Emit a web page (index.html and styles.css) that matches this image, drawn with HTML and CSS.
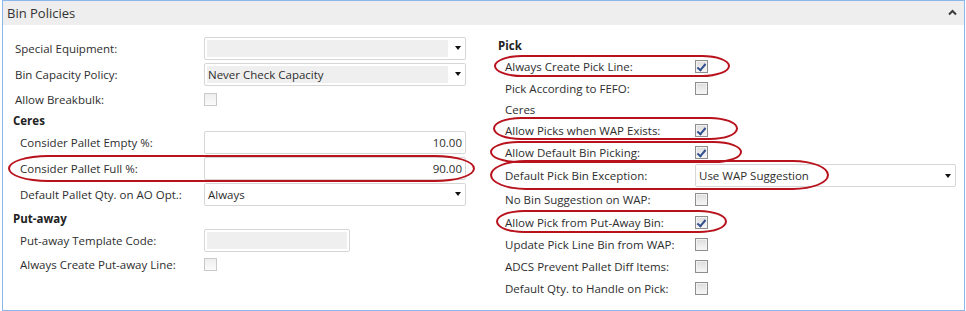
FILE: index.html
```html
<!DOCTYPE html>
<html lang="en">

<head>
    <meta charset="UTF-8">
    <title>Bin Policies</title>
    <link rel="stylesheet" href="styles.css">
</head>

<body>

<div class="panel">
    <div class="panel-head">
        <span class="panel-title">Bin Policies</span>
        <svg class="collapse" width="9" height="7" viewBox="0 0 9 7"><polyline points="1,5.5 4.5,2 8,5.5" fill="none" stroke="#3c3c3c" stroke-width="2"/></svg>
    </div>

    <div class="panel-body">

        <!-- Columna izquierda -->
        <div class="col col-left">
            <div class="row top">
                <label>Special Equipment:</label>
                <div class="ctl"><div class="box select"><span class="fill"></span><i class="arrow"></i></div></div>
            </div>
            <div class="row top">
                <label>Bin Capacity Policy:</label>
                <div class="ctl"><div class="box select"><span class="fill">Never Check Capacity</span><i class="arrow"></i></div></div>
            </div>
            <div class="row top h24">
                <label>Allow Breakbulk:</label>
                <div class="ctl"><span class="chk off"></span></div>
            </div>

            <div class="group h18">Ceres</div>
            <div class="row sub">
                <label>Consider Pallet Empty %:</label>
                <div class="ctl"><div class="box num">10.00</div></div>
            </div>
            <div class="row sub">
                <label>Consider Pallet Full %:</label>
                <div class="ctl"><div class="box num">90.00</div></div>
            </div>
            <div class="row sub">
                <label>Default Pallet Qty. on AO Opt.:</label>
                <div class="ctl"><div class="box select plain"><span class="fill">Always</span><i class="arrow"></i></div></div>
            </div>

            <div class="group h22">Put-away</div>
            <div class="row sub h22">
                <label>Put-away Template Code:</label>
                <div class="ctl"><div class="box short"><span class="fill"></span></div></div>
            </div>
            <div class="row sub">
                <label>Always Create Put-away Line:</label>
                <div class="ctl"><span class="chk off"></span></div>
            </div>
        </div>

        <!-- Columna derecha -->
        <div class="col col-right">
            <div class="group h20">Pick</div>
            <div class="row">
                <label>Always Create Pick Line:</label>
                <div class="ctl"><span class="chk on"></span></div>
            </div>
            <div class="row">
                <label>Pick According to FEFO:</label>
                <div class="ctl"><span class="chk"></span></div>
            </div>
            <div class="row h21">
                <label>Ceres</label>
            </div>
            <div class="row h20">
                <label>Allow Picks when WAP Exists:</label>
                <div class="ctl"><span class="chk on"></span></div>
            </div>
            <div class="row h24">
                <label>Allow Default Bin Picking:</label>
                <div class="ctl"><span class="chk on"></span></div>
            </div>
            <div class="row h23">
                <label>Default Pick Bin Exception:</label>
                <div class="ctl"><div class="box select plain"><span class="fill">Use WAP Suggestion</span><i class="arrow"></i></div></div>
            </div>
            <div class="row h24">
                <label>No Bin Suggestion on WAP:</label>
                <div class="ctl"><span class="chk"></span></div>
            </div>
            <div class="row">
                <label>Allow Pick from Put-Away Bin:</label>
                <div class="ctl"><span class="chk on"></span></div>
            </div>
            <div class="row">
                <label>Update Pick Line Bin from WAP:</label>
                <div class="ctl"><span class="chk"></span></div>
            </div>
            <div class="row">
                <label>ADCS Prevent Pallet Diff Items:</label>
                <div class="ctl"><span class="chk"></span></div>
            </div>
            <div class="row">
                <label>Default Qty. to Handle on Pick:</label>
                <div class="ctl"><span class="chk"></span></div>
            </div>
        </div>
    </div>

    <!-- Marcas rojas -->
    <span class="mark mark-full"></span>
    <span class="mark mark-pickline"></span>
    <span class="mark mark-wap"></span>
    <span class="mark mark-defbin"></span>
    <span class="mark mark-exception"></span>
    <span class="mark mark-putaway"></span>
</div>

</body>

</html>
```

FILE: styles.css
```css
* {
    box-sizing: border-box;
    font-family: 'Open Sans', 'Noto Sans', sans-serif;
}

body {
    margin: 0;
    padding: 0;
    background-color: #ffffff;
    color: #2e2e2e;
    font-size: 11.5px;
}

.panel {
    position: relative;
    margin-left: 2px;
    width: 963px;
    height: 311px;
    border: 1px solid #8db6ea;
    background-color: #ffffff;
}

.panel-head {
    height: 24px;
    background-color: #eeeeee;
    display: flex;
    align-items: center;
    justify-content: space-between;
    padding: 0 7px 0 4px;
}

.panel-title {
    font-size: 13px;
    color: #333333;
}

.collapse {
    margin-top: -1px;
}

.panel-body {
    display: flex;
    padding-top: 10px;
}

.col-left {
    width: 463px;
    padding-left: 10px;
}

.col-right {
    width: 458px;
    margin-left: 32px;
}

.row {
    display: flex;
    align-items: center;
    height: 22px;
}

.col-left .row {
    height: 26px;
}

.row label {
    flex: 1;
    white-space: nowrap;
}

.row.top label {
    padding-left: 2px;
}

.row.sub label,
.col-right .row label {
    padding-left: 7px;
}

.ctl {
    width: 262px;
    display: flex;
    align-items: center;
}

.col-right .ctl {
    width: 261px;
}

.group {
    display: flex;
    align-items: center;
    font-weight: bold;
    font-size: 11.5px;
    color: #222222;
}

.h18 { height: 18px; }
.h20 { height: 20px !important; }
.h21 { height: 21px !important; }
.h22 { height: 22px !important; }
.h23 { height: 23px !important; }
.h24 { height: 24px !important; }

/* CAMPOS */
.box {
    width: 100%;
    height: 23px;
    border: 1px solid #d6d6d6;
    border-radius: 2px;
    background-color: #ffffff;
    display: flex;
    align-items: center;
    padding: 2px;
}

.box .fill {
    flex: 1;
    height: 100%;
    background-color: #efefef;
    display: flex;
    align-items: center;
    padding-left: 1px;
    white-space: nowrap;
}

.box.select .fill {
    margin-right: 7px;
}

.box.plain .fill {
    background-color: transparent;
}

.box.short {
    width: 146px;
}

.box.num {
    justify-content: flex-end;
    padding-right: 3px;
}

.arrow {
    width: 0;
    height: 0;
    border-left: 3.5px solid transparent;
    border-right: 3.5px solid transparent;
    border-top: 4px solid #111111;
    margin-right: 2px;
}

/* CASILLAS */
.chk {
    position: relative;
    width: 13px;
    height: 13px;
    border: 1px solid #8e8e8e;
    background: linear-gradient(#dcdcdc, #f7f7f7);
    box-shadow: inset 0 0 0 1px #f2f2f2;
}

.chk.off {
    border-color: #c9c9c9;
    background: linear-gradient(#eeeeee, #fbfbfb);
    box-shadow: none;
}

.chk.on::after {
    content: "";
    position: absolute;
    left: 3px;
    top: 1px;
    width: 3px;
    height: 7px;
    border-right: 2px solid #33508f;
    border-bottom: 2px solid #33508f;
    transform: rotate(40deg);
}

/* MARCAS */
.mark {
    position: absolute;
    border: 2px solid #b8121c;
    border-radius: 28px / 50%;
}

.mark-full { left: 5px; top: 154px; width: 467px; height: 27px; border-radius: 40px / 50%; }
.mark-pickline { left: 491px; top: 54px; width: 236px; height: 22px; }
.mark-wap { left: 490px; top: 116px; width: 245px; height: 23px; }
.mark-defbin { left: 487px; top: 140px; width: 252px; height: 22px; }
.mark-exception { left: 487px; top: 159px; width: 339px; height: 30px; border-radius: 36px / 50%; }
.mark-putaway { left: 493px; top: 209px; width: 231px; height: 23px; }
```
